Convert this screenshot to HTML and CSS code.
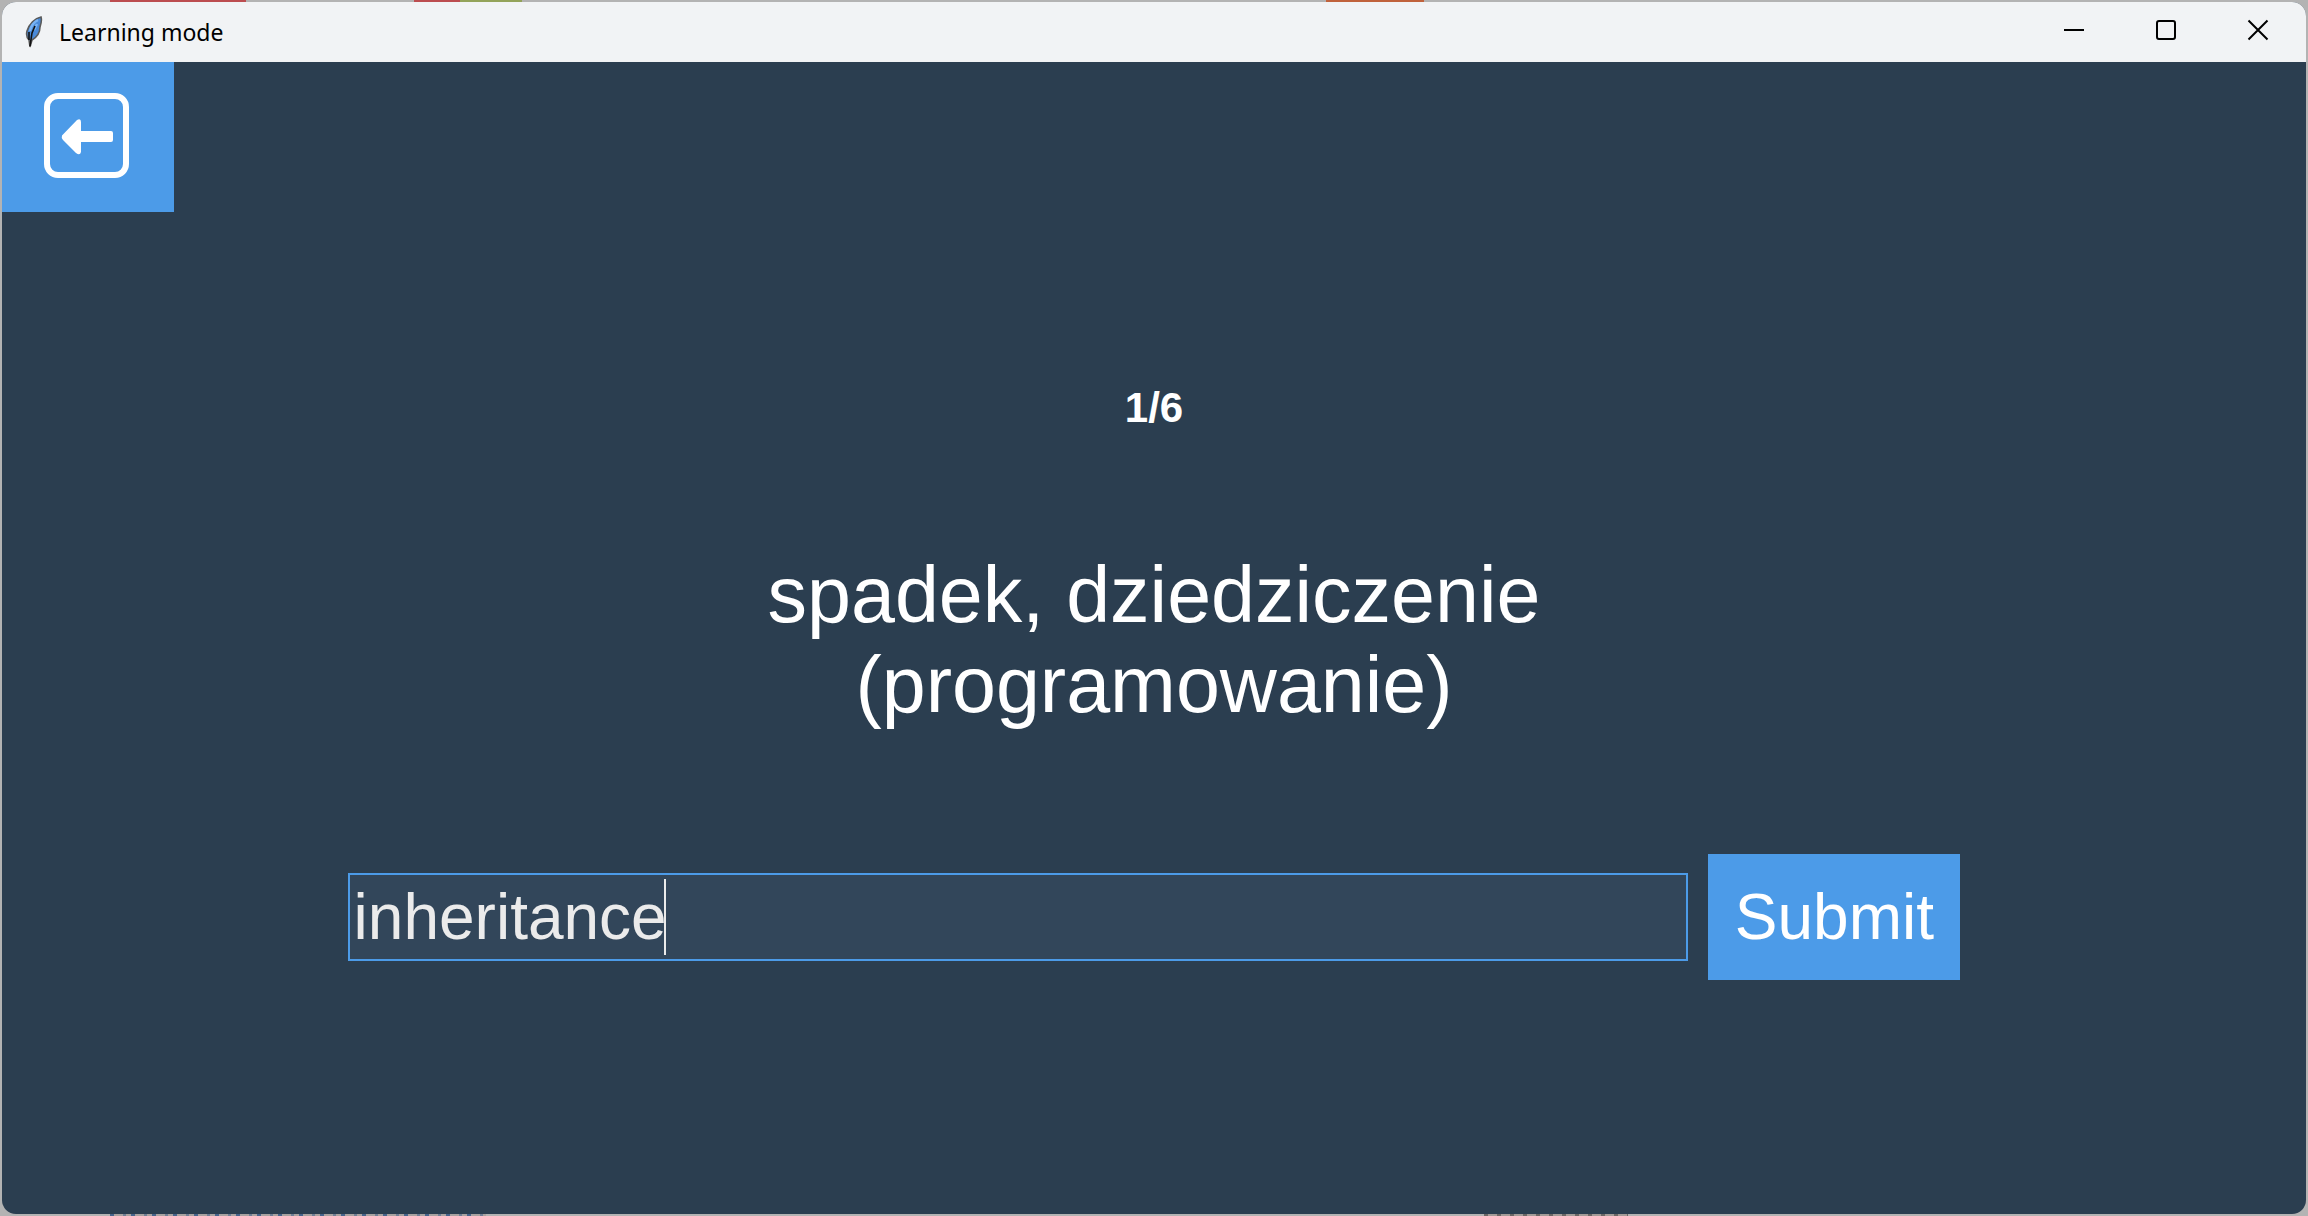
FILE: index.html
```html
<!DOCTYPE html>
<html lang="en">
<head>
<meta charset="utf-8">
<meta name="viewport" content="width=device-width, initial-scale=1">
<title>Learning mode</title>
<link rel="stylesheet" href="styles.css">
</head>
<body>
<div class="window">
  <header class="titlebar">
    <svg class="feather" viewBox="0 0 18 32" aria-hidden="true">
      <path d="M16 1C10 2 4 8 2 15c-1 4 0 7 2 9l1 7 2-7c5-3 8-8 8-13 1-3 2-7 1-10z" fill="#4a8ad8" stroke="#5a5a5a" stroke-width="1.6"/>
      <path d="M13 4C9 6 6 10 5 15M12 8l-3 6" fill="none" stroke="#78b4f5" stroke-width="2.4"/>
      <path d="M10 10L7 17 5 30M4 16v8" fill="none" stroke="#111" stroke-width="1.6"/>
    </svg>
    <h1 class="title">Learning mode</h1>
    <div class="controls">
      <button class="control" type="button" aria-label="Minimize"><svg viewBox="0 0 20 20"><path d="M0 10h20"/></svg></button>
      <button class="control" type="button" aria-label="Maximize"><svg viewBox="0 0 20 20"><rect x="1" y="1" width="18" height="18" rx="2"/></svg></button>
      <button class="control" type="button" aria-label="Close"><svg viewBox="0 0 20 20"><path d="M.5.5l19 19M19.5.5l-19 19"/></svg></button>
    </div>
  </header>
  <main class="content">
    <button class="back" type="button" aria-label="Back">
      <svg viewBox="0 0 86 86"><rect x="3" y="3" width="79" height="79" rx="11" fill="none" stroke="#fff" stroke-width="6"/><path d="M18 42.500L33 27Q37 25 37 29V38H67Q69 38 69 40V47Q69 49 67 49H37V59Q36 63 32 60L19 47Q17 45 18 42.500Z" fill="#fff"/></svg>
    </button>
    <section class="lesson">
      <p class="progress">1/6</p>
      <label class="question" for="answer">spadek, dziedziczenie<br>(programowanie)</label>
      <form class="answer">
        <div class="field">
          <input class="entry" id="answer" type="text" value="inheritance" autocomplete="off" spellcheck="false">
          <span class="caret-line" aria-hidden="true"><span class="caret"></span></span>
        </div>
        <button class="submit" type="button">Submit</button>
      </form>
    </section>
  </main>
</div>
</body>
</html>
```
FILE: styles.css
```css
* { box-sizing: border-box; }
body {
  margin: 0;
  min-height: 100vh;
  display: flex;
  padding: 2px;
  font-family: "Liberation Sans", Arial, sans-serif;
  background:
    linear-gradient(90deg, transparent 110px, #bc4d50 110px 246px, transparent 246px 414px, #bc4d50 414px 460px, #93a35a 460px 522px, transparent 522px 1326px, #c0623c 1326px 1424px, transparent 1424px) top / 100% 2px no-repeat,
    repeating-linear-gradient(90deg, #46648c 0 4px, #a8a2a0 4px 13px, #6f7f96 13px 16px, #a8a2a0 16px 21px) 110px 100% / 376px 2px no-repeat,
    repeating-linear-gradient(90deg, #6b6765 0 4px, #a39b97 4px 13px) 1484px 100% / 144px 2px no-repeat,
    #b3b3b3;
}
.window {
  flex: 1;
  display: flex;
  flex-direction: column;
  overflow: hidden;
  border-radius: 14px;
  background: #2b3e50;
}
.titlebar {
  display: flex;
  align-items: center;
  height: 60px;
  padding-left: 23px;
  background: #f1f3f5;
  color: #000;
}
.feather { width: 18px; height: 32px; }
.title {
  flex: 1;
  margin: 0 0 0 16px;
  font: 400 23px/32px "Noto Sans", "Open Sans", sans-serif;
}
.controls { display: flex; height: 100%; padding-right: 2px; }
.control {
  width: 92px;
  padding: 0 0 4px;
  border: 0;
  background: transparent;
}
.control svg {
  width: 20px;
  height: 20px;
  overflow: visible;
  vertical-align: middle;
  fill: none;
  stroke: #000;
  stroke-width: 2;
}
.content { flex: 1; display: flex; flex-direction: column; }
.back {
  align-self: flex-start;
  display: flex;
  align-items: center;
  justify-content: center;
  width: 172px;
  height: 150px;
  padding: 0 2px 2px 0;
  border: 0;
  background: #4c9be8;
}
.back svg { width: 86px; height: 86px; }
.lesson {
  display: flex;
  flex-direction: column;
  align-items: center;
  width: 70%;
  margin: 0 auto;
  padding-top: 172px;
  color: #fff;
}
.progress { margin: 0; font-size: 42px; font-weight: 700; line-height: 48px; }
.question {
  margin-top: 118px;
  font-size: 79px;
  line-height: 90px;
  text-align: center;
}
.answer {
  display: flex;
  align-items: center;
  gap: 20px;
  width: 100%;
  margin-top: 124px;
  font-size: 64px;
}
.field { position: relative; flex: 1; min-width: 0; }
.entry {
  display: block;
  width: 100%;
  height: 88px;
  padding: 2px 4px;
  border: 2px solid #4c9be8;
  border-radius: 0;
  outline: 0;
  background: #32465a;
  color: #ebebeb;
  font: inherit;
}
.caret-line { position: absolute; top: 6px; left: 316px; }
.caret { display: block; width: 2px; height: 76px; background: #ebebeb; }
.submit {
  width: 252px;
  height: 126px;
  padding: 0;
  border: 0;
  background: #4c9be8;
  color: #fff;
  font: inherit;
}
```
